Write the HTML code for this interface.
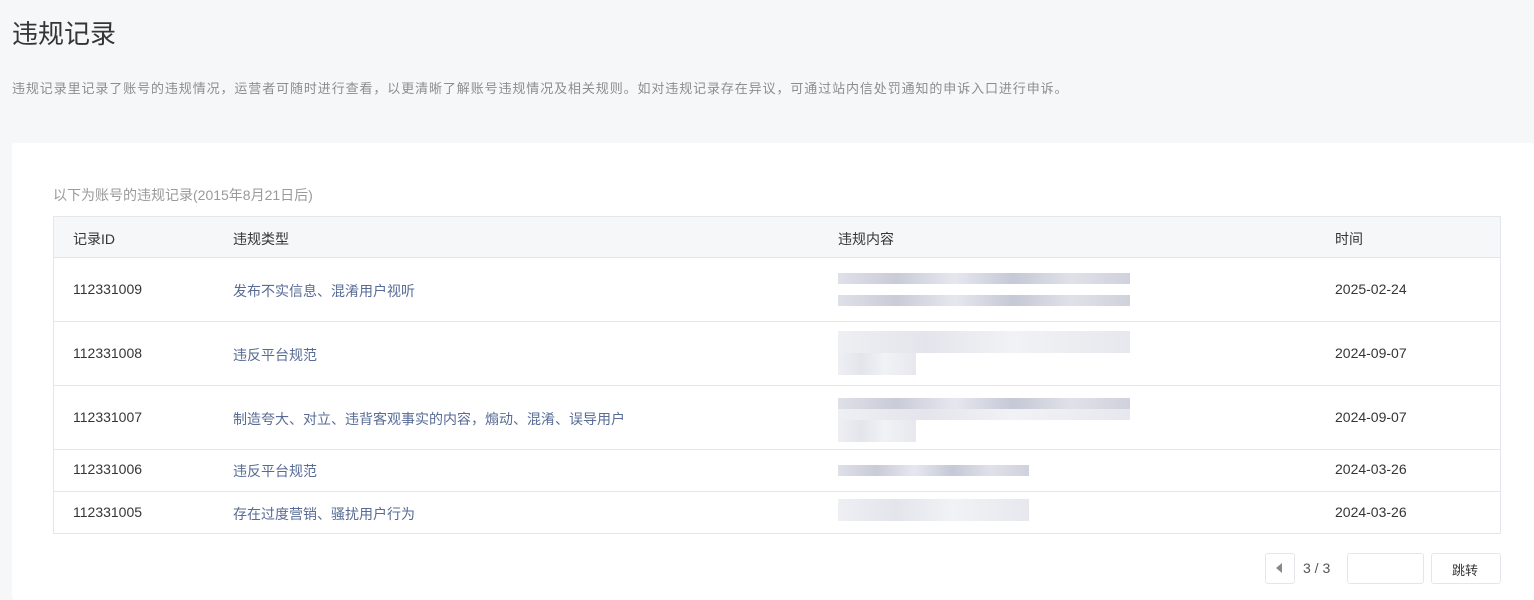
<!DOCTYPE html>
<html><head><meta charset="utf-8"><style>
*{margin:0;padding:0;box-sizing:border-box}
html{overflow:hidden;height:600px}
body{width:1534px;height:600px;background:#f6f7f9;font-family:"Liberation Sans","Noto Sans CJK SC",sans-serif;position:relative;overflow:hidden;color:#353535}
.a{position:absolute;white-space:nowrap}
h1{position:absolute;left:12px;top:14px;font-size:26px;font-weight:normal;color:#353535}
.card{position:absolute;left:12px;top:143px;width:1522px;height:457px;background:#fff;border-radius:3px}
.tbl{position:absolute;left:53px;top:216px;width:1448px;height:318px;border:1px solid #e4e6eb}
.hd{position:absolute;left:0;top:0;width:100%;height:41px;background:#f6f7f9;border-bottom:1px solid #e4e6eb}
.row{position:absolute;left:0;width:100%;border-bottom:1px solid #e4e6eb}
.t{font-size:14px}
.lnk{color:#576b95}
.bl{position:absolute;height:11px;background:linear-gradient(90deg,#dfe0e8,#c9cbd8 20%,#e6e7ee 40%,#c5c8d6 60%,#e0e1e8 80%,#cfd1dc)}
.bl2{position:absolute;height:11px;background:linear-gradient(90deg,#eeeff3,#e4e5ec 30%,#f1f2f5 60%,#e7e8ee)}
.btn{position:absolute;border:1px solid #e4e6eb;border-radius:3px;background:#fff}
</style></head><body>
<h1>违规记录</h1>
<div class="a" style="left:12px;top:78px;font-size:13px;letter-spacing:0.9px;color:#8d8d8d">违规记录里记录了账号的违规情况，运营者可随时进行查看，以更清晰了解账号违规情况及相关规则。如对违规记录存在异议，可通过站内信处罚通知的申诉入口进行申诉。</div>
<div class="card"></div>
<div class="a" style="left:53px;top:185px;font-size:14px;color:#9a9a9a">以下为账号的违规记录(2015年8月21日后)</div>
<div class="tbl">
<div class="hd"></div>
<div class="row" style="top:41px;height:64px"></div>
<div class="row" style="top:105px;height:64px"></div>
<div class="row" style="top:169px;height:64px"></div>
<div class="row" style="top:233px;height:42px"></div>
</div>
<div class="a t" style="left:73px;top:229px">记录ID</div>
<div class="a t" style="left:233px;top:229px">违规类型</div>
<div class="a t" style="left:838px;top:229px">违规内容</div>
<div class="a t" style="left:1335px;top:229px">时间</div>

<div class="a t" style="left:73px;top:281px">112331009</div>
<div class="a t lnk" style="left:233px;top:281px">发布不实信息、混淆用户视听</div>
<div class="a t" style="left:1335px;top:281px">2025-02-24</div>
<div class="bl" style="left:838px;top:273px;width:292px"></div>
<div class="bl" style="left:838px;top:295px;width:292px"></div>

<div class="a t" style="left:73px;top:345px">112331008</div>
<div class="a t lnk" style="left:233px;top:345px">违反平台规范</div>
<div class="a t" style="left:1335px;top:345px">2024-09-07</div>
<div class="bl2" style="left:838px;top:331px;width:292px;height:22px"></div>
<div class="bl2" style="left:838px;top:353px;width:78px;height:22px"></div>

<div class="a t" style="left:73px;top:409px">112331007</div>
<div class="a t lnk" style="left:233px;top:409px">制造夸大、对立、违背客观事实的内容，煽动、混淆、误导用户</div>
<div class="a t" style="left:1335px;top:409px">2024-09-07</div>
<div class="bl" style="left:838px;top:398px;width:292px"></div>
<div class="bl2" style="left:838px;top:409px;width:292px"></div>
<div class="bl2" style="left:838px;top:420px;width:78px;height:22px"></div>

<div class="a t" style="left:73px;top:461px">112331006</div>
<div class="a t lnk" style="left:233px;top:461px">违反平台规范</div>
<div class="a t" style="left:1335px;top:461px">2024-03-26</div>
<div class="bl" style="left:838px;top:465px;width:191px"></div>

<div class="a t" style="left:73px;top:504px">112331005</div>
<div class="a t lnk" style="left:233px;top:504px">存在过度营销、骚扰用户行为</div>
<div class="a t" style="left:1335px;top:504px">2024-03-26</div>
<div class="bl2" style="left:838px;top:499px;width:191px;height:22px"></div>

<div class="btn" style="left:1265px;top:553px;width:30px;height:31px"></div>
<div class="a" style="left:1276px;top:563px;width:0;height:0;border-top:5px solid transparent;border-bottom:5px solid transparent;border-right:6px solid #888"></div>
<div class="a" style="left:1303px;top:560px;font-size:14px;color:#555">3 / 3</div>
<div class="btn" style="left:1347px;top:553px;width:77px;height:31px"></div>
<div class="btn" style="left:1431px;top:553px;width:70px;height:31px"></div>
<div class="a" style="left:1452px;top:560px;font-size:13px;color:#353535">跳转</div>
</body></html>
